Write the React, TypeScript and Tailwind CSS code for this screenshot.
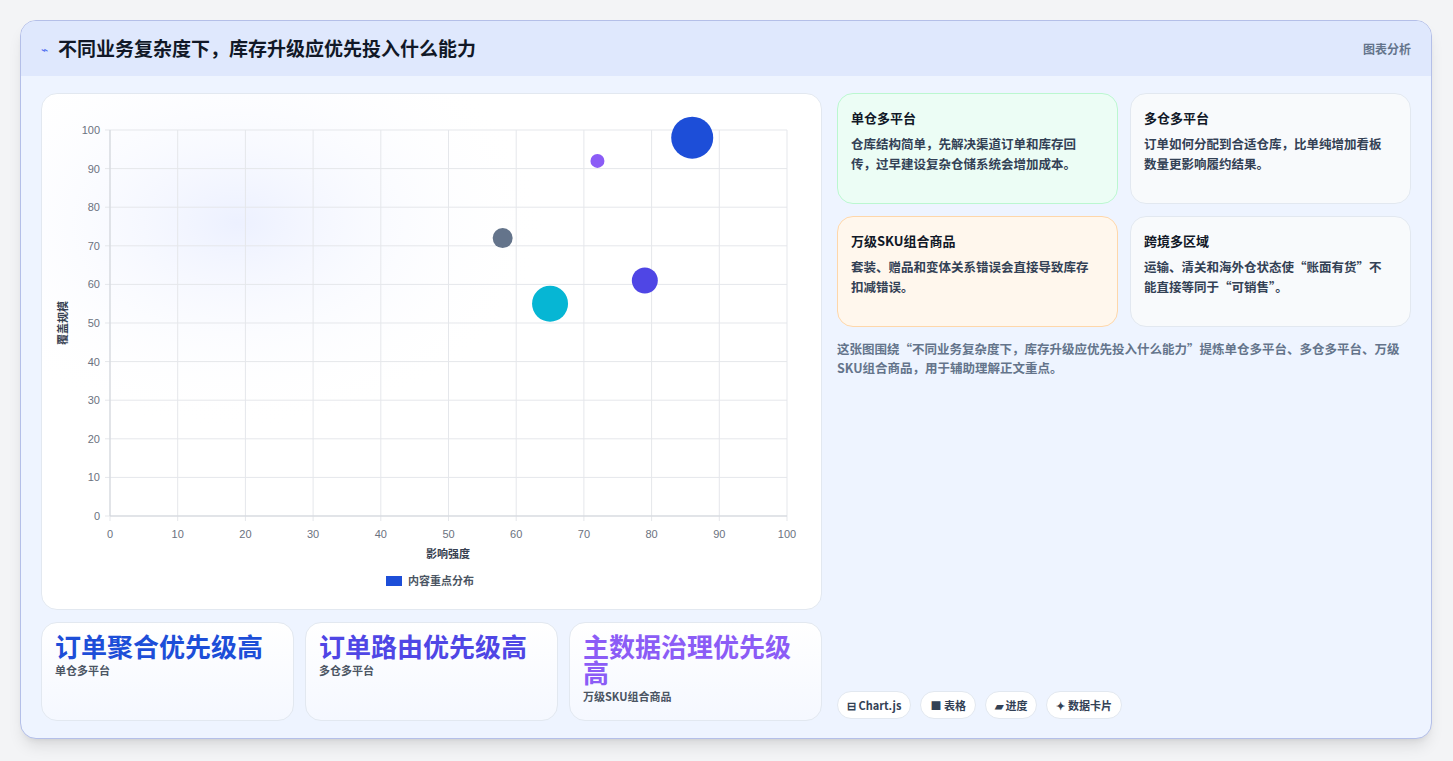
import React from "react";

const font = { fontFamily: '"Noto Sans CJK SC", "Noto Sans", sans-serif' };

const bubbles = [
  { x: 58, y: 72, r: 10, c: "#64748b" },
  { x: 72, y: 92, r: 7, c: "#8b5cf6" },
  { x: 86, y: 98, r: 21, c: "#1d4ed8" },
  { x: 79, y: 61, r: 13, c: "#4f46e5" },
  { x: 65, y: 55, r: 18, c: "#06b6d4" },
];

function Chart() {
  const x0 = 68, x1 = 745, yt = 36, yb = 422;
  const px = (v: number) => x0 + ((x1 - x0) * v) / 100;
  const py = (v: number) => yb - ((yb - yt) * v) / 100;
  const ticks = [0, 10, 20, 30, 40, 50, 60, 70, 80, 90, 100];
  return (
    <svg width="781" height="516" className="block">
      <defs>
        <radialGradient id="glow" cx="0.25" cy="0.25" r="0.4">
          <stop offset="0" stopColor="#e0e7ff" stopOpacity="0.6" />
          <stop offset="1" stopColor="#ffffff" stopOpacity="0" />
        </radialGradient>
      </defs>
      <rect width="781" height="516" fill="url(#glow)" />
      {ticks.map((t) => (
        <g key={t}>
          <line x1={px(t)} y1={yt} x2={px(t)} y2={yb + 5} stroke="#e5e7eb" />
          <line x1={x0 - 5} y1={py(t)} x2={x1} y2={py(t)} stroke="#e5e7eb" />
          <text x={px(t)} y={yb + 22} fontSize="11" fill="#6b7280" textAnchor="middle" fontFamily="Liberation Sans, sans-serif">{t}</text>
          <text x={x0 - 10} y={py(t) + 4} fontSize="11" fill="#6b7280" textAnchor="end" fontFamily="Liberation Sans, sans-serif">{t}</text>
        </g>
      ))}
      <line x1={x0} y1={yt} x2={x0} y2={yb} stroke="#d1d5db" />
      <line x1={x0} y1={yb} x2={x1} y2={yb} stroke="#d1d5db" />
      {bubbles.map((b, i) => (
        <circle key={i} cx={px(b.x)} cy={py(b.y)} r={b.r} fill={b.c} />
      ))}
      <text x={406} y={464} fontSize="11" fontWeight="bold" fill="#374151" textAnchor="middle" style={font}>影响强度</text>
      <text transform={`translate(25 229) rotate(-90)`} fontSize="11" fontWeight="bold" fill="#374151" textAnchor="middle" style={font}>覆盖规模</text>
      <rect x={344} y={482} width={16} height={10} fill="#1d4ed8" />
      <text x={366} y={491} fontSize="11" fontWeight="bold" fill="#4b5563" style={font}>内容重点分布</text>
    </svg>
  );
}

const cards = [
  { t: "单仓多平台", d: "仓库结构简单，先解决渠道订单和库存回传，过早建设复杂仓储系统会增加成本。", cls: "bg-[#ecfdf5] border-[#bbf7d0]" },
  { t: "多仓多平台", d: "订单如何分配到合适仓库，比单纯增加看板数量更影响履约结果。", cls: "bg-[#f8fafc] border-[#e2e8f0]" },
  { t: "万级SKU组合商品", d: "套装、赠品和变体关系错误会直接导致库存扣减错误。", cls: "bg-[#fff7ed] border-[#fed7aa]" },
  { t: "跨境多区域", d: "运输、清关和海外仓状态使“账面有货”不能直接等同于“可销售”。", cls: "bg-[#f8fafc] border-[#e2e8f0]" },
];

const stats = [
  { t: "订单聚合优先级高", s: "单仓多平台", c: "text-[#1d4ed8]" },
  { t: "订单路由优先级高", s: "多仓多平台", c: "text-[#4f46e5]" },
  { t: "主数据治理优先级高", s: "万级SKU组合商品", c: "text-[#8b5cf6]" },
];

const chips = ["⊟ Chart.js", "■ 表格", "▰ 进度", "✦ 数据卡片"];

export default function App() {
  return (
    <div className="w-[1453px] h-[761px] bg-[#f3f4f6] pt-[20px] pl-[20px]" style={font}>
      <div className="w-[1412px] h-[719px] rounded-2xl border border-[#b4bfe8] bg-[#eef4ff] overflow-hidden shadow-lg flex flex-col">
        <div className="h-[55px] bg-[#dfe8fd] flex items-center justify-between px-5 shrink-0">
          <div className="flex items-center gap-[10px]">
            <span className="text-[#4f6ef0] text-xs">⌁</span>
            <span className="text-[19px] font-bold text-[#111827]">不同业务复杂度下，库存升级应优先投入什么能力</span>
          </div>
          <span className="text-xs font-bold text-[#64748b]">图表分析</span>
        </div>
        <div className="flex gap-[15px] px-5 pt-[17px]">
          <div className="w-[781px] flex flex-col gap-[12px]">
            <div className="h-[517px] rounded-2xl bg-white border border-[#e2e8f0] overflow-hidden">
              <Chart />
            </div>
            <div className="flex gap-[11px]">
              {stats.map((s) => (
                <div key={s.t} className="w-[253px] h-[99px] rounded-2xl bg-gradient-to-b from-white to-[#f5f8ff] border border-[#e2e8f0] pl-[13px] pr-[18px] pt-[10px]">
                  <div className={`text-[26px] font-bold leading-[26px] ${s.c}`}>{s.t}</div>
                  <div className="text-[11px] font-bold text-[#4b5563] mt-[3px]">{s.s}</div>
                </div>
              ))}
            </div>
          </div>
          <div className="w-[577px] flex flex-col">
            <div className="grid grid-cols-2 gap-x-[12px] gap-y-[12px]">
              {cards.map((c) => (
                <div key={c.t} className={`h-[111px] rounded-2xl border pl-[13px] pr-[20px] pt-[14px] ${c.cls}`}>
                  <div className="text-[13px] font-bold text-[#111827]">{c.t}</div>
                  <div className="text-[12.5px] font-bold text-[#334155] leading-[20px] mt-[6px]">{c.d}</div>
                </div>
              ))}
            </div>
            <div className="text-[12.5px] font-bold text-[#64748b] leading-[19px] mt-[12px]">
              这张图围绕“不同业务复杂度下，库存升级应优先投入什么能力”提炼单仓多平台、多仓多平台、万级SKU组合商品，用于辅助理解正文重点。
            </div>
            <div className="flex gap-[9px] mt-[314px]">
              {chips.map((c) => (
                <span key={c} className="h-[28px] px-[9px] rounded-full bg-white border border-[#e2e8f0] text-[11px] font-bold text-[#334155] flex items-center">{c}</span>
              ))}
            </div>
          </div>
        </div>
      </div>
    </div>
  );
}
